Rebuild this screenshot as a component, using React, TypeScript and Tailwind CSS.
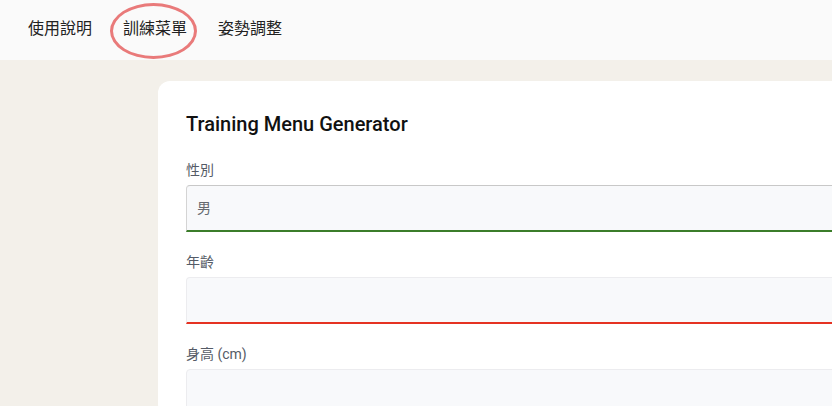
const fontStack = { fontFamily: 'Roboto, "Noto Sans CJK TC", sans-serif' };

function Field({ label, value, bar }: { label: string; value?: string; bar?: string }) {
  return (
    <div className="mb-[20px]">
      <div className="text-[14px] leading-[20px] text-[#555b66] mb-[5px]">{label}</div>
      <div className={`h-[47px] rounded-t-[4px] border border-[#ececef] bg-[#f8f9fb] flex items-center px-[10px] text-[14px] text-[#666a70] ${bar ?? ''}`}>
        {value}
      </div>
    </div>
  );
}

export default function App() {
  const tabs = ['使用說明', '訓練菜單', '姿勢調整'];
  return (
    <div className="w-[832px] h-[406px] overflow-hidden bg-[#f3f0ea]" style={fontStack}>
      {/* top nav */}
      <div className="h-[60px] bg-[#fafafa] flex items-center pl-[28px] gap-[31px]">
        {tabs.map((t, i) => (
          <div key={t} className="relative text-[16px] leading-[24px] text-[#222] -mt-[2px]">
            {t}
            {i === 1 && (
              <span className="absolute left-[-13px] top-[-14px] w-[87px] h-[56px] rounded-[50%] border-[3px] border-[#e97a7a]" />
            )}
          </div>
        ))}
      </div>

      {/* card */}
      <div className="pl-[158px] pt-[21px]">
        <div className="w-[760px] bg-white rounded-[12px] pl-[28px] pt-[29px]">
          <h1 className="text-[20px] leading-[28px] font-medium text-[#111] mb-[22px]">Training Menu Generator</h1>
          <Field label="性別" value="男" bar="border-t-[#c8c8c8] border-l-[#d4d4d4] border-b-2 border-b-[#3b7d2a]" />
          <Field label="年齡" bar="border-b-2 border-b-[#e53222]" />
          <Field label="身高 (cm)" />
        </div>
      </div>
    </div>
  );
}
